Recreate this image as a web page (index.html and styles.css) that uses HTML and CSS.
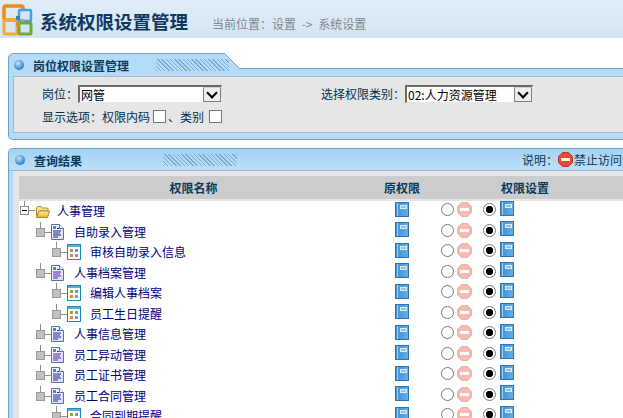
FILE: index.html
```html
<!DOCTYPE html>
<html lang="zh">
<head>
<meta charset="utf-8">
<title>系统权限设置管理</title>
<link rel="stylesheet" href="styles.css">
</head>
<body>
<svg class="defs" width="0" height="0" aria-hidden="true">
  <defs>
    <linearGradient id="fold" x1="0" y1="0" x2="0" y2="1"><stop offset="0" stop-color="#fff2a8"/><stop offset="1" stop-color="#e8b028"/></linearGradient>
    <linearGradient id="bookg" x1="0" y1="0" x2="1" y2="0"><stop offset="0" stop-color="#3f8fd0"/><stop offset="1" stop-color="#62b0ea"/></linearGradient>
    <linearGradient id="docg" x1="0" y1="0" x2="1" y2="1"><stop offset="0" stop-color="#ffffff"/><stop offset="1" stop-color="#cfdcf8"/></linearGradient>
    <symbol id="folder" viewBox="0 0 15 13">
      <path d="M1.5 11.5V2.5L2.5 1.5H6L7 3H12.5L13 4V6H4.5L1.5 11.5Z" fill="#fbe48c" stroke="#a98a2a"/>
      <path d="M1.5 12.5L4 6H14.5L12.5 12.5Z" fill="url(#fold)" stroke="#a98a2a"/>
    </symbol>
    <symbol id="doc" viewBox="0 0 13 16">
      <path d="M.5.5H8.5L12.5 4.5V15.5H.5Z" fill="url(#docg)" stroke="#5a7098"/>
      <path d="M8.5.5V4.5H12.5" fill="#fff" stroke="#5a7098"/>
      <rect x="2" y="2" width="3" height="3" fill="#2f8fe0"/>
      <path d="M6 4.5H8M2 7H10M2 9H9M2 11H10M2 13H7" stroke="#1d1d9c" fill="none"/>
    </symbol>
    <symbol id="doc2" viewBox="0 0 13 16">
      <path d="M.5.5H8.5L12.5 4.5V15.5H.5Z" fill="url(#docg)" stroke="#5a7098"/>
      <path d="M8.5.5V4.5H12.5" fill="#fff" stroke="#5a7098"/>
      <rect x="2" y="2" width="3" height="3" fill="#2f8fe0"/>
      <path d="M6 4.5H8M2 7H10M2 9H9M2 11H10M2 13H7" stroke="#5a18b8" fill="none"/>
    </symbol>
    <symbol id="app" viewBox="0 0 14 16">
      <rect x=".5" y=".5" width="13" height="15" fill="#fff" stroke="#1a8ac0"/>
      <rect x="1" y="1" width="12" height="2" fill="#58b0d8"/>
      <rect x="3" y="5" width="3" height="3" fill="#8eb020"/>
      <rect x="8" y="5" width="3" height="3" fill="#50a8e8"/>
      <rect x="3" y="10" width="3" height="3" fill="#f08050"/>
      <rect x="8" y="10" width="3" height="3" fill="#a088e0"/>
    </symbol>
    <symbol id="book" viewBox="0 0 14 15">
      <rect x=".5" y=".5" width="13" height="14" fill="url(#bookg)" stroke="#2f74ac"/>
      <path d="M2.5 1V14" stroke="#a6d2f2"/>
      <rect x="5" y="3" width="7" height="4" fill="#d8ecfb"/>
      <rect x="6" y="4.5" width="5" height="1" fill="#4a98d8"/>
    </symbol>
    <symbol id="stop" viewBox="0 0 15 15">
      <path d="M4.5.5H10.5L14.5 4.5V10.5L10.5 14.5H4.5L.5 10.5V4.5Z" fill="#ea4b32" stroke="#b73a28"/>
      <rect x="3" y="6" width="9" height="3" fill="#fff"/>
    </symbol>
    <symbol id="link0" viewBox="0 0 15 20">
      <path d="M4.5 0V5M8 9.5H15" stroke="#8c8c8c" fill="none"/>
      <rect x=".5" y="5.5" width="8" height="8" fill="#fff" stroke="#8c8c8c"/>
      <path d="M2 9.5H7" stroke="#000"/>
    </symbol>
    <symbol id="link" viewBox="0 0 15 20">
      <path d="M4.5 0V6M8 10.5H15" stroke="#8c8c8c" fill="none"/>
      <rect x=".5" y="6.5" width="8" height="8" fill="#c0c0c0" stroke="#999"/>
    </symbol>
  </defs>
</svg>

<header class="topbar">
  <svg class="logo" viewBox="0 0 32 34" width="32" height="34" aria-hidden="true">
    <rect x="3" y="4" width="19" height="14" rx="2" fill="none" stroke="#f08a18" stroke-width="3.5"/>
    <rect x="3" y="18" width="13" height="14" rx="2" fill="none" stroke="#f2aa30" stroke-width="3"/>
    <rect x="18" y="8" width="12" height="11" rx="1" fill="#d3e4f2" stroke="#4c9ad8" stroke-width="2.5"/>
    <rect x="18" y="21" width="12" height="11" rx="1" fill="#d3e4f2" stroke="#72a838" stroke-width="3"/>
    <rect x="15" y="14" width="4" height="4" fill="#3c80c0"/>
    <rect x="15" y="20" width="4" height="4" fill="#d09030"/>
    <rect x="20" y="17" width="3" height="3" fill="#98b848"/>
  </svg>
  <h1 class="title">系统权限设置管理</h1>
  <p class="crumb">当前位置：设置 -&gt; 系统设置</p>
</header>

<section class="panel panel-form">
  <div class="head head-tab">
    <svg class="tab-shape" width="623" height="23" aria-hidden="true">
      <path d="M.5 23V4.5L4.5.5H216.5L231.5 15.5H623V23Z" fill="#b4dcf8"/>
      <path d="M.5 23V4.5L4.5.5H216.5L231.5 15.5H623" fill="none" stroke="#6ca4c8"/>
    </svg>
    <i class="bullet"></i>
    <h2 class="head-title">岗位权限设置管理</h2>
    <i class="hatch"></i>
  </div>
  <form class="inner form-inner">
    <div class="form-row">
      <label class="field field-post">岗位：
        <span class="pick pick-post"><select class="pick-input"><option>网管</option></select><i class="pick-btn"></i></span>
      </label>
      <label class="field">选择权限类别：
        <span class="pick pick-type"><select class="pick-input"><option>02:人力资源管理</option></select><i class="pick-btn"></i></span>
      </label>
    </div>
    <div class="form-row options">
      <span>显示选项：权限内码</span><input class="check" type="checkbox"><span class="sep">、类别</span><input class="check" type="checkbox">
    </div>
  </form>
</section>

<section class="panel panel-result">
  <div class="head head-full">
    <i class="bullet"></i>
    <h2 class="head-title">查询结果</h2>
    <i class="hatch"></i>
    <p class="legend">说明：<svg class="ic-stop" aria-hidden="true"><use href="#stop"/></svg>禁止访问</p>
  </div>
  <div class="inner result-inner">
    <div class="grid grid-head">
      <div>权限名称</div><div>原权限</div><div>权限设置</div>
    </div>
    <div class="grid row lvl0">
      <div class="name"><svg class="link"><use href="#link0"/></svg><svg class="ic-folder"><use href="#folder"/></svg><span>人事管理</span></div>
      <div class="orig"><svg class="ic-book"><use href="#book"/></svg></div>
      <div class="set"><input class="radio" type="radio" name="r1"><svg class="ic-stop faded"><use href="#stop"/></svg><input class="radio on" type="radio" name="r1" checked><svg class="ic-book raise"><use href="#book"/></svg></div>
    </div>
    <div class="grid row lvl1">
      <div class="name"><svg class="link"><use href="#link"/></svg><svg class="ic-doc"><use href="#doc"/></svg><span>自助录入管理</span></div>
      <div class="orig"><svg class="ic-book"><use href="#book"/></svg></div>
      <div class="set"><input class="radio" type="radio" name="r2"><svg class="ic-stop faded"><use href="#stop"/></svg><input class="radio on" type="radio" name="r2" checked><svg class="ic-book raise"><use href="#book"/></svg></div>
    </div>
    <div class="grid row lvl2">
      <div class="name"><svg class="link"><use href="#link"/></svg><svg class="ic-app"><use href="#app"/></svg><span>审核自助录入信息</span></div>
      <div class="orig"><svg class="ic-book"><use href="#book"/></svg></div>
      <div class="set"><input class="radio" type="radio" name="r3"><svg class="ic-stop faded"><use href="#stop"/></svg><input class="radio on" type="radio" name="r3" checked><svg class="ic-book raise"><use href="#book"/></svg></div>
    </div>
    <div class="grid row lvl1">
      <div class="name"><svg class="link"><use href="#link"/></svg><svg class="ic-doc"><use href="#doc2"/></svg><span>人事档案管理</span></div>
      <div class="orig"><svg class="ic-book"><use href="#book"/></svg></div>
      <div class="set"><input class="radio" type="radio" name="r4"><svg class="ic-stop faded"><use href="#stop"/></svg><input class="radio on" type="radio" name="r4" checked><svg class="ic-book raise"><use href="#book"/></svg></div>
    </div>
    <div class="grid row lvl2">
      <div class="name"><svg class="link"><use href="#link"/></svg><svg class="ic-app"><use href="#app"/></svg><span>编辑人事档案</span></div>
      <div class="orig"><svg class="ic-book"><use href="#book"/></svg></div>
      <div class="set"><input class="radio" type="radio" name="r5"><svg class="ic-stop faded"><use href="#stop"/></svg><input class="radio on" type="radio" name="r5" checked><svg class="ic-book raise"><use href="#book"/></svg></div>
    </div>
    <div class="grid row lvl2">
      <div class="name"><svg class="link"><use href="#link"/></svg><svg class="ic-app"><use href="#app"/></svg><span>员工生日提醒</span></div>
      <div class="orig"><svg class="ic-book"><use href="#book"/></svg></div>
      <div class="set"><input class="radio" type="radio" name="r6"><svg class="ic-stop faded"><use href="#stop"/></svg><input class="radio on" type="radio" name="r6" checked><svg class="ic-book raise"><use href="#book"/></svg></div>
    </div>
    <div class="grid row lvl1">
      <div class="name"><svg class="link"><use href="#link"/></svg><svg class="ic-doc"><use href="#doc"/></svg><span>人事信息管理</span></div>
      <div class="orig"><svg class="ic-book"><use href="#book"/></svg></div>
      <div class="set"><input class="radio" type="radio" name="r7"><svg class="ic-stop faded"><use href="#stop"/></svg><input class="radio on" type="radio" name="r7" checked><svg class="ic-book raise"><use href="#book"/></svg></div>
    </div>
    <div class="grid row lvl1">
      <div class="name"><svg class="link"><use href="#link"/></svg><svg class="ic-doc"><use href="#doc2"/></svg><span>员工异动管理</span></div>
      <div class="orig"><svg class="ic-book"><use href="#book"/></svg></div>
      <div class="set"><input class="radio" type="radio" name="r8"><svg class="ic-stop faded"><use href="#stop"/></svg><input class="radio on" type="radio" name="r8" checked><svg class="ic-book raise"><use href="#book"/></svg></div>
    </div>
    <div class="grid row lvl1">
      <div class="name"><svg class="link"><use href="#link"/></svg><svg class="ic-doc"><use href="#doc"/></svg><span>员工证书管理</span></div>
      <div class="orig"><svg class="ic-book"><use href="#book"/></svg></div>
      <div class="set"><input class="radio" type="radio" name="r9"><svg class="ic-stop faded"><use href="#stop"/></svg><input class="radio on" type="radio" name="r9" checked><svg class="ic-book raise"><use href="#book"/></svg></div>
    </div>
    <div class="grid row lvl1">
      <div class="name"><svg class="link"><use href="#link"/></svg><svg class="ic-doc"><use href="#doc"/></svg><span>员工合同管理</span></div>
      <div class="orig"><svg class="ic-book"><use href="#book"/></svg></div>
      <div class="set"><input class="radio" type="radio" name="r10"><svg class="ic-stop faded"><use href="#stop"/></svg><input class="radio on" type="radio" name="r10" checked><svg class="ic-book raise"><use href="#book"/></svg></div>
    </div>
    <div class="grid row lvl2">
      <div class="name"><svg class="link"><use href="#link"/></svg><svg class="ic-app"><use href="#app"/></svg><span>合同到期提醒</span></div>
      <div class="orig"><svg class="ic-book"><use href="#book"/></svg></div>
      <div class="set"><input class="radio" type="radio" name="r11"><svg class="ic-stop faded"><use href="#stop"/></svg><input class="radio on" type="radio" name="r11" checked><svg class="ic-book raise"><use href="#book"/></svg></div>
    </div>
  </div>
</section>
</body>
</html>
```
FILE: styles.css
```css
* { box-sizing: border-box; }
html, body { margin: 0; padding: 0; height: 418px; overflow: hidden; background: #fff; }
body { font: 12px/1 "Noto Sans CJK SC", "Liberation Sans", sans-serif; color: #003050; }
h1, h2, p { margin: 0; font-weight: normal; }
.defs { position: absolute; }

.topbar { display: flex; align-items: center; height: 38px; background: linear-gradient(#e1eef9, #d3e4f2); }
.logo { flex: none; margin-left: 1px; }
.title { margin: 4px 0 0 7px; font-size: 18.5px; font-weight: 700; color: #10375e; white-space: nowrap; }
.crumb { margin: 9px 0 0 24px; color: #808890; white-space: nowrap; word-spacing: 3px; }

.panel { margin-left: 8px; overflow: hidden; }
.panel-form { margin-top: 15px; height: 87px; border-left: 1px solid #6ca4c8; border-bottom: 1px solid #6ca4c8; border-radius: 5px 0 0 5px; background: #b4dcf8; }
.panel-result { margin-top: 8px; height: 272px; border-left: 1px solid #6ca4c8; border-top: 1px solid #6ca4c8; border-radius: 5px 0 0 0; background: #b4dcf8; }

.head { position: relative; display: flex; align-items: center; }
.head-tab { height: 23px; margin-left: -1px; background: #fff; }
.tab-shape { position: absolute; left: 0; top: 0; }
.head-full { height: 22px; background: linear-gradient(#a4d2f2, #bde0f9); border-bottom: 1px solid #9fb8c8; }
.bullet { position: relative; flex: none; width: 10px; height: 10px; margin-left: 6px; border-radius: 50%; background: radial-gradient(circle at 40% 35%, #bfe6ff, #2c80cc 70%, #27588c); }
.head-title { position: relative; margin: 2px 0 0 9px; font-size: 12px; font-weight: 700; color: #0a3a58; white-space: nowrap; }
.hatch { position: relative; flex: none; width: 73px; height: 12px; margin-left: 27px; background: repeating-linear-gradient(45deg, #7fa9c8 0 1px, transparent 1px 3px); }
.head-full .hatch { margin-left: 81px; width: 74px; }
.legend { display: flex; align-items: center; margin-left: auto; padding-right: 1px; color: #103850; white-space: nowrap; }

.inner { margin-left: 4px; background: #e6e6e6; }
.form-inner { height: 57px; padding: 8px 0 0 28px; border: 1px solid #a8bac8; border-right: 0; }
.form-row { display: flex; align-items: center; }
.field { display: flex; align-items: center; white-space: nowrap; }
.field-post { width: 279px; }
.pick { display: flex; height: 18px; background: #fff; border: 1px solid; border-color: #6a6a6a #e6e6e6 #e6e6e6 #6a6a6a; border-width: 2px 1px 1px 2px; }
.pick-post { width: 144px; }
.pick-type { width: 128px; }
.pick-input { flex: 1; min-width: 0; height: 15px; padding: 0 1px; border: 0; outline: 0; appearance: none; background: #fff; font: 12px/15px "Noto Sans CJK SC", sans-serif; color: #000; }
.pick-btn { position: relative; flex: none; width: 18px; height: 15px; background: #eeeeea; border: 1px solid #808080; border-top-color: #d0d0d0; }
.pick-btn::after { content: ""; position: absolute; left: 4px; top: 1px; width: 6px; height: 6px; border: solid #000; border-width: 0 2px 2px 0; transform: rotate(45deg); }
.options { margin-top: 7px; }
.check { appearance: none; flex: none; width: 13px; height: 13px; margin: 0 0 0 3px; background: #fff; border: 1px solid #777; }
.sep { margin-left: 2px; margin-right: 2px; }

.result-inner { height: 100%; padding: 5px 0 0 6px; }
.grid { display: grid; grid-template-columns: 349px 68px 178px; background: #fff; }
.grid-head { height: 23px; align-items: center; text-align: center; background: #ccc; font-weight: 700; color: #0a3a58; margin-bottom: 2px; }
.row { height: 20.5px; align-items: center; color: #000080; }
.name { display: flex; align-items: center; height: 100%; white-space: nowrap; }
.lvl0 .name { padding-left: 1px; }
.lvl1 .name { padding-left: 17px; }
.lvl2 .name { padding-left: 33px; }
.link { flex: none; width: 15px; height: 20px; }
.ic-folder { flex: none; width: 15px; height: 13px; margin-right: 7px; }
.ic-doc { flex: none; width: 13px; height: 16px; margin-right: 10px; }
.ic-app { flex: none; width: 14px; height: 16px; margin-right: 9px; }
.orig { display: flex; justify-content: center; }
.ic-book { flex: none; width: 14px; height: 15px; margin-top: -4px; }
.set { display: flex; align-items: center; padding-left: 5px; margin-top: -3px; }
.ic-stop { flex: none; width: 15px; height: 15px; margin-right: 1px; }
.faded { opacity: .38; margin: 0 0 0 3px; }
.radio { appearance: none; flex: none; width: 13px; height: 13px; margin: 0; border: 1px solid #777; border-radius: 50%; background: #fff; }
.on { margin-left: 11px; background: radial-gradient(circle, #000 0 3.4px, #fff 4px); }
.raise { margin: -3px 0 0 4px; }
```
